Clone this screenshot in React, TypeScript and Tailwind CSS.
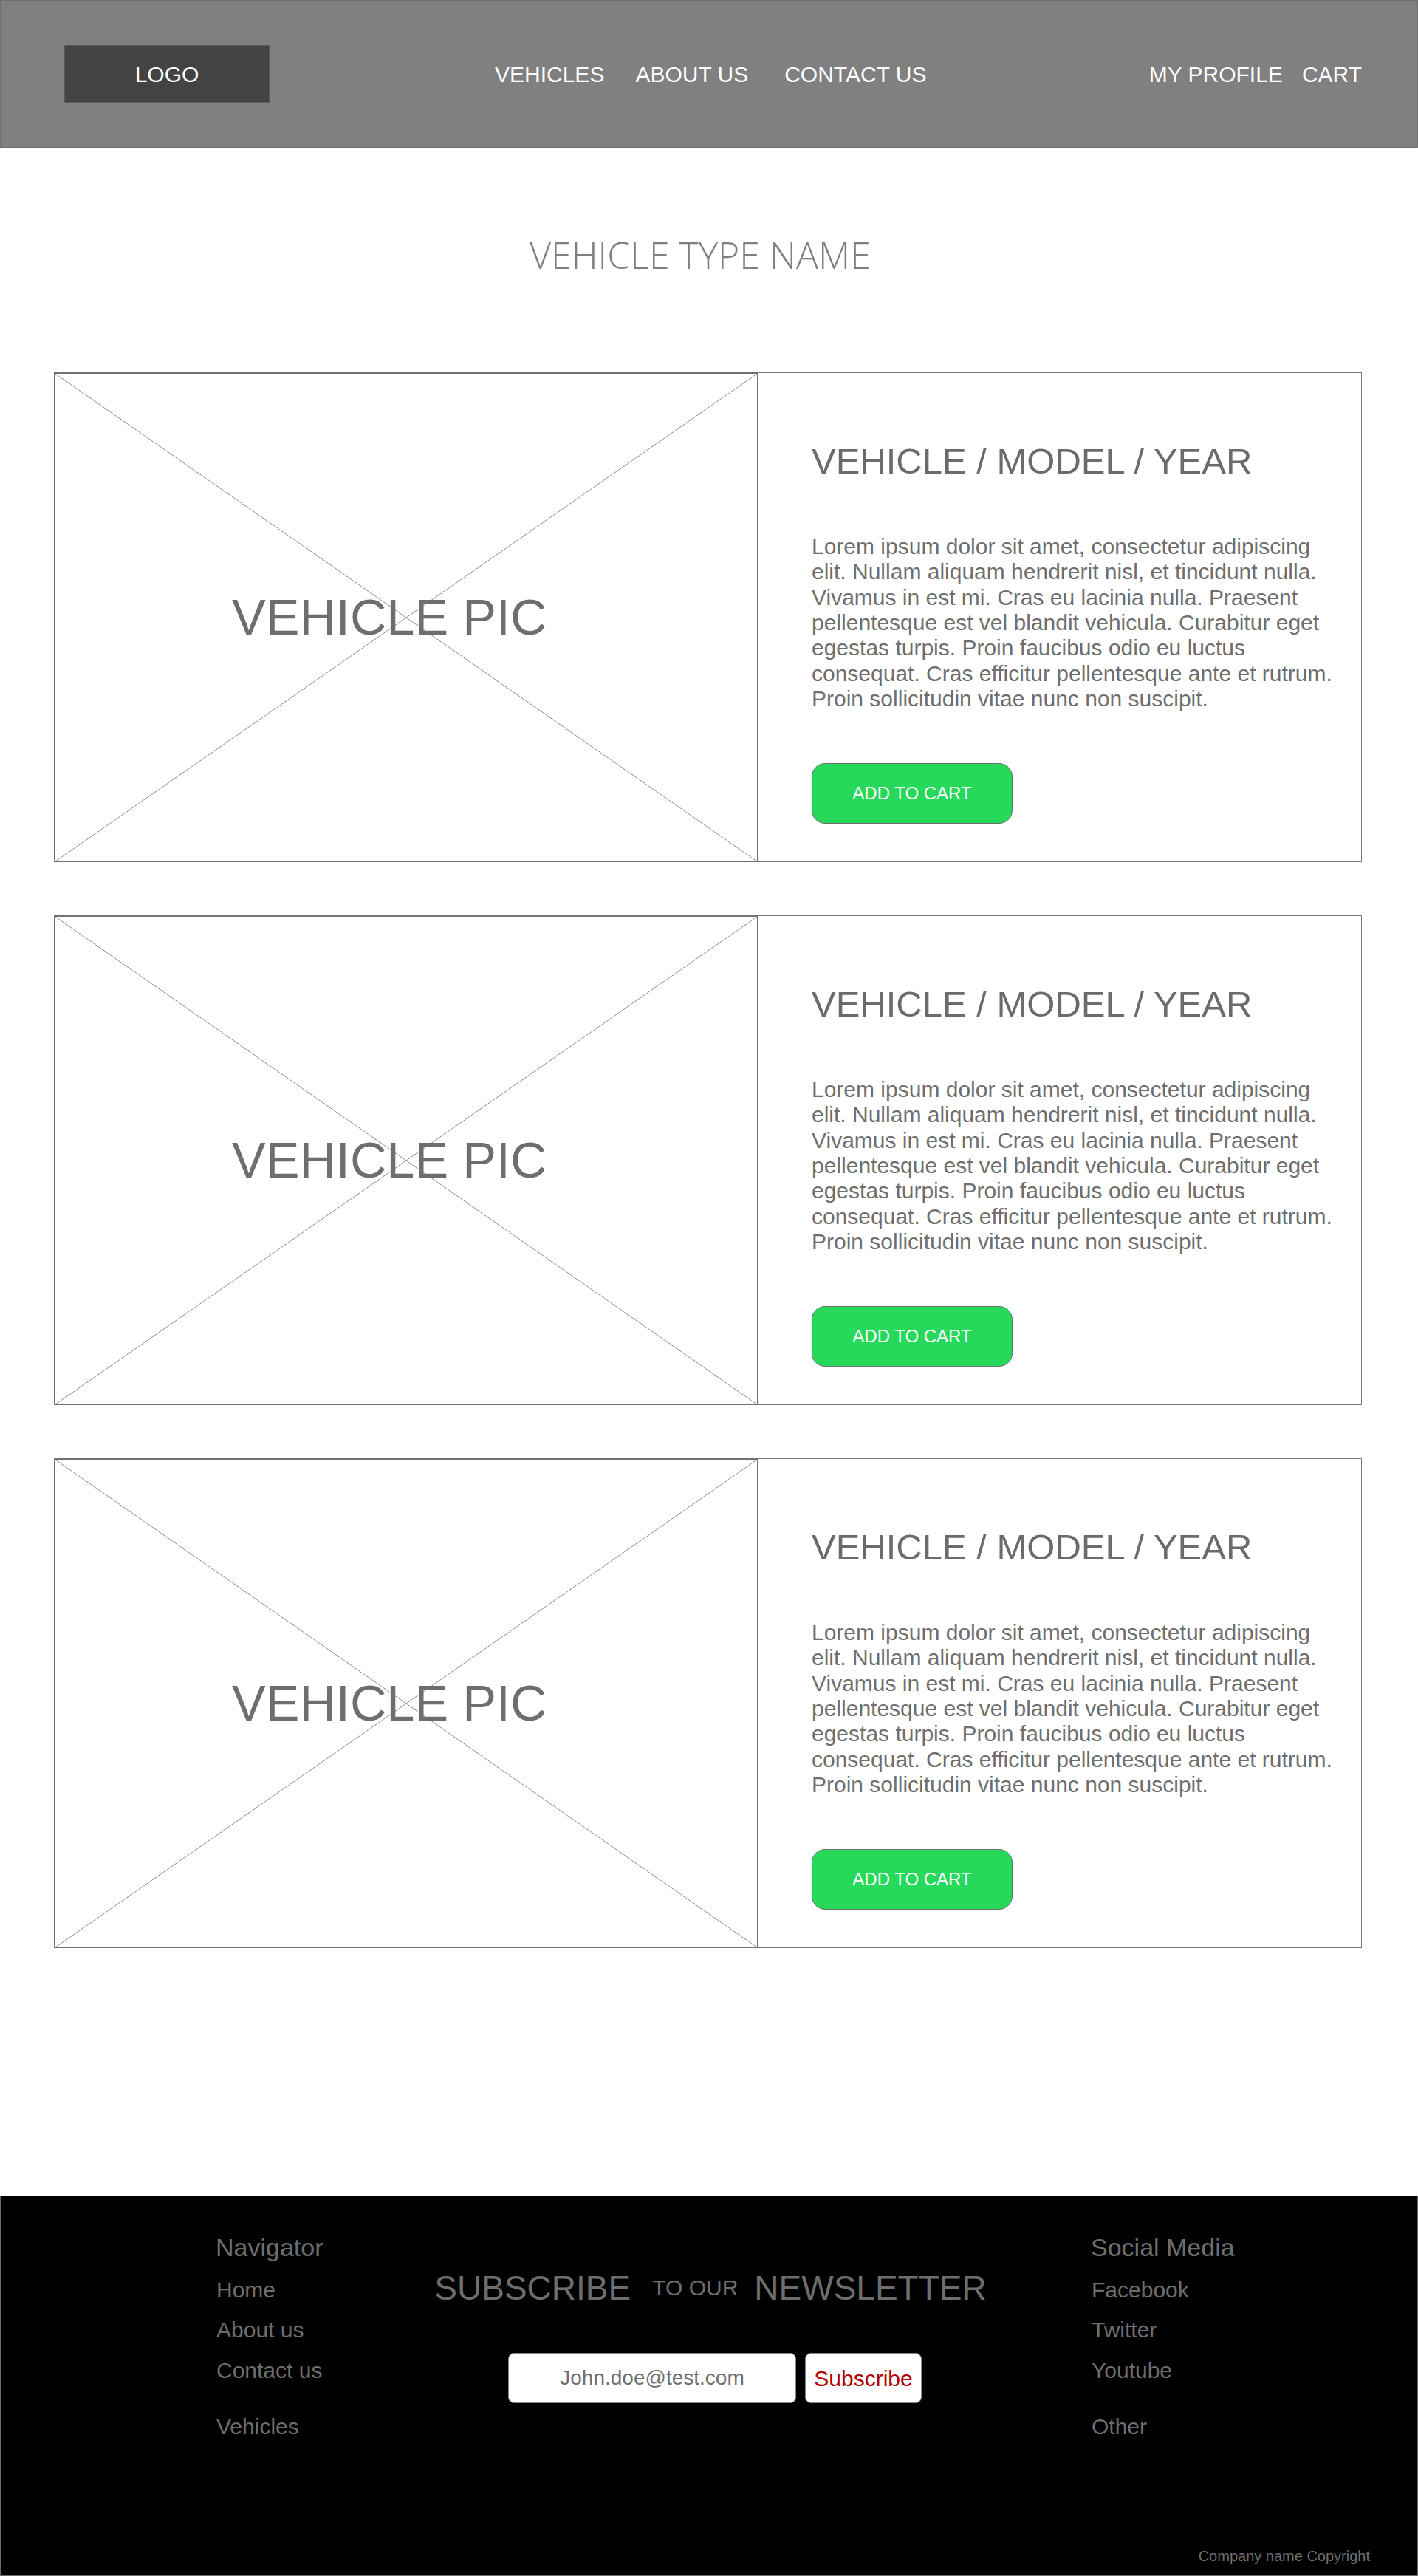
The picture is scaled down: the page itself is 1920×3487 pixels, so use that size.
const lorem =
  "Lorem ipsum dolor sit amet, consectetur adipiscing elit. Nullam aliquam hendrerit nisl, et tincidunt nulla. Vivamus in est mi. Cras eu lacinia nulla. Praesent pellentesque est vel blandit vehicula. Curabitur eget egestas turpis. Proin faucibus odio eu luctus consequat. Cras efficitur pellentesque ante et rutrum. Proin sollicitudin vitae nunc non suscipit.";

const arial = "font-['Liberation_Sans',Arial,sans-serif]";

function VehicleCard() {
  return (
    <div className="flex h-[663px] w-[1771px]">
      {/* Image placeholder */}
      <div className="relative flex w-[953px] items-center border-t-2 border-l-2 border-r border-b border-[#727272] pl-[239px]">
        <svg className="absolute inset-0 h-full w-full" viewBox="0 0 100 100" preserveAspectRatio="none">
          <line x1="0" y1="0" x2="100" y2="100" stroke="#8c8c8c" strokeWidth="1" vectorEffect="non-scaling-stroke" />
          <line x1="100" y1="0" x2="0" y2="100" stroke="#8c8c8c" strokeWidth="1" vectorEffect="non-scaling-stroke" />
        </svg>
        <span className="relative whitespace-nowrap text-[68.5px] leading-none text-[#6e6e6e]">VEHICLE PIC</span>
      </div>

      {/* Details */}
      <div className="flex flex-1 flex-col border-t border-r border-b border-[#777777] pt-[95px] pl-[73px]">
        <h2 className="whitespace-nowrap text-[49px] leading-[49px] text-[#6b6b6b]">VEHICLE / MODEL / YEAR</h2>
        <p className="mt-[74px] w-[718px] text-[30px] leading-[34.33px] text-[#6e6e6e]">{lorem}</p>
        <button className="mt-[70px] flex h-[82px] w-[272px] items-center justify-center rounded-[18px] border border-[#6f6f6f] bg-[#26d95a] text-[24px] text-white">
          ADD TO CART
        </button>
      </div>
    </div>
  );
}

export default function App() {
  return (
    <div className={`w-[1920px] bg-white ${arial}`}>
      {/* Header */}
      <header className="flex h-[200px] items-center whitespace-nowrap border border-[#6f6f6f] bg-[#808080] pl-[86px] pr-[75px] text-[30px] text-white">
        <div className="flex h-[78px] w-[278px] items-center justify-center border border-[#5a5a5a] bg-[#434343]">
          LOGO
        </div>
        <nav className="ml-[305px] flex items-center">
          <span>VEHICLES</span>
          <span className="ml-[42px]">ABOUT US</span>
          <span className="ml-[49px]">CONTACT US</span>
        </nav>
        <div className="ml-auto flex items-center">
          <span>MY PROFILE</span>
          <span className="ml-[26px]">CART</span>
        </div>
      </header>

      {/* Title */}
      <div className="flex justify-center pt-[115px] pr-[24px]">
        <h1 className="whitespace-nowrap font-['Open_Sans',sans-serif] text-[50px] font-light leading-[60px] text-[#7f7f7f]">
          VEHICLE TYPE NAME
        </h1>
      </div>

      {/* Cards */}
      <main className="mt-[129px] flex flex-col gap-[72px] pl-[73px]">
        <VehicleCard />
        <VehicleCard />
        <VehicleCard />
      </main>

      {/* Footer */}
      <footer className="mt-[335px] flex h-[515px] flex-col whitespace-nowrap border border-[#6b6b6b] bg-black text-[#6e6e6e]">
        <div className="flex pt-[49px] pl-[291px]">
          <div className="flex w-[298px] flex-col">
            <h3 className="text-[34px] leading-[40px]">Navigator</h3>
            <a className="mt-[20px] pl-[1px] text-[30px] leading-[36px]">Home</a>
            <a className="mt-[18px] pl-[1px] text-[30px] leading-[36px]">About us</a>
            <a className="mt-[19px] pl-[1px] text-[30px] leading-[36px]">Contact us</a>
            <a className="mt-[40px] pl-[1px] text-[30px] leading-[36px]">Vehicles</a>
          </div>

          <div className="flex w-[742px] flex-col items-center">
            <div className="mt-[48px] flex items-center pl-[2px]">
              <span className="text-[46px] leading-[54px]">SUBSCRIBE</span>
              <span className="ml-[29px] text-[30px] leading-[36px]">TO OUR</span>
              <span className="ml-[22px] text-[46px] leading-[54px]">NEWSLETTER</span>
            </div>
            <div className="mt-[61px] flex pl-[14px]">
              <div className="flex h-[68px] w-[390px] items-center justify-center rounded-[8px] border border-[#8a8a8a] bg-white text-[28px] text-[#6e6e6e]">
                John.doe@test.com
              </div>
              <button className="ml-[12px] flex h-[68px] w-[158px] items-center justify-center rounded-[8px] border border-[#8a8a8a] bg-white text-[30px] text-[#b00000]">
                Subscribe
              </button>
            </div>
          </div>

          <div className="ml-[145px] flex flex-col pl-[1px]">
            <h3 className="-ml-[1px] text-[34px] leading-[40px]">Social Media</h3>
            <a className="mt-[20px] text-[30px] leading-[36px]">Facebook</a>
            <a className="mt-[18px] text-[30px] leading-[36px]">Twitter</a>
            <a className="mt-[19px] text-[30px] leading-[36px]">Youtube</a>
            <a className="mt-[40px] text-[30px] leading-[36px]">Other</a>
          </div>
        </div>

        <p className="mt-auto self-end pr-[64px] pb-[14px] text-[20px] leading-[24px]">Company name Copyright</p>
      </footer>
    </div>
  );
}
